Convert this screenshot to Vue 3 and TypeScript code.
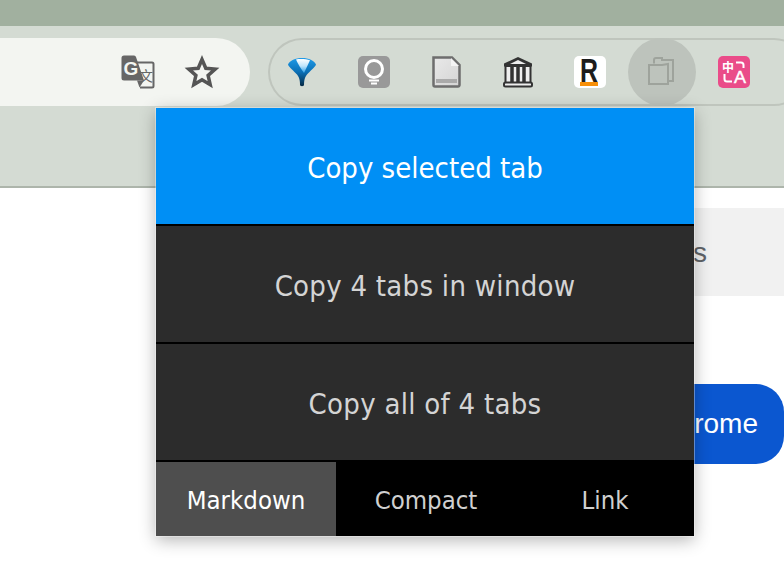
<script setup lang="ts">
const actions: string[] = ['Copy selected tab', 'Copy 4 tabs in window', 'Copy all of 4 tabs']
const formats: string[] = ['Markdown', 'Compact', 'Link']
</script>

<template>
  <div class="screen">
    <div class="titlebar"></div>
    <div class="toolbar">
      <div class="address">
        <span class="slot">
          <svg width="34" height="34" viewBox="0 0 34 34">
            <path d="M14 7.500H31a1.500 1.500 0 0 1 1.500 1.500V31a1.500 1.500 0 0 1-1.500 1.500H19" fill="#f3f5f1" stroke="#666" stroke-width="2" />
            <path d="M3 0.500H13a2 2 0 0 1 2 1.500L23 25.500H3a2.500 2.500 0 0 1-2.500-2.500V3A2.500 2.500 0 0 1 3 0.500Z" fill="#666" />
            <path d="M16 25.500H23L18.500 32.500Z" fill="#666" />
            <text x="2.500" y="20" class="g-letter">G</text>
            <text x="18" y="26" class="g-han">文</text>
          </svg>
        </span>
        <span class="slot">
          <svg width="34" height="34" viewBox="0 0 34 34">
            <polygon points="17,4.500 20.800,13.300 30.200,14.100 23.100,20.400 25.200,29.700 17,24.800 8.800,29.700 10.900,20.400 3.800,14.100 13.200,13.300" fill="none" stroke="#555" stroke-width="3.500" stroke-linejoin="miter" />
          </svg>
        </span>
      </div>
      <div class="extensions">
        <span class="slot">
          <svg width="32" height="32" viewBox="0 0 32 32">
            <defs>
              <linearGradient id="cone" x1="0" y1="0" x2="0" y2="1">
                <stop offset="0" stop-color="#1f9be8" />
                <stop offset="0.5" stop-color="#0a6fb5" />
                <stop offset="1" stop-color="#062a45" />
              </linearGradient>
              <linearGradient id="shine" x1="0" y1="0" x2="0" y2="1">
                <stop offset="0" stop-color="#ffffff" />
                <stop offset="0.5" stop-color="#bfe4fb" />
                <stop offset="1" stop-color="#2b9fe8" />
              </linearGradient>
            </defs>
            <path d="M2 8.500C4 4.500 9 2 16 2s12 2.500 14 6.500c-1 3-6 6.500-9 10-2 2.500-3 5-3 10.500 0 1.500-4 1.500-4 0 0-5.500-1-8-3-10.500C8 15 3 11.500 2 8.500Z" fill="url(#cone)" />
            <path d="M10 3.500C13 2.800 20 2.800 24 4.200L18 17C15 13 12 8 10 3.500Z" fill="url(#shine)" />
          </svg>
        </span>
        <span class="slot">
          <svg width="32" height="32" viewBox="0 0 32 32">
            <rect width="32" height="32" rx="5" fill="#999" />
            <circle cx="16" cy="13" r="8.500" fill="none" stroke="#fff" stroke-width="3" />
            <path d="M11 24.500H21M13 27.500H19" stroke="#fff" stroke-width="2" />
          </svg>
        </span>
        <span class="slot">
          <svg width="32" height="32" viewBox="0 0 32 32">
            <defs>
              <linearGradient id="sheet" x1="0" y1="0" x2="1" y2="1">
                <stop offset="0" stop-color="#e9e9e9" />
                <stop offset="1" stop-color="#d4d4d4" />
              </linearGradient>
            </defs>
            <path d="M3.500 1.500H22L29.500 9V29a1.500 1.500 0 0 1-1.500 1.500H5A1.500 1.500 0 0 1 3.500 29Z" fill="url(#sheet)" stroke="#6e6e6e" stroke-width="2.500" />
            <path d="M21 2V10H29" fill="#f4f4f4" />
            <rect x="6" y="23" width="21" height="4" fill="#aaa" />
          </svg>
        </span>
        <span class="slot">
          <svg width="32" height="32" viewBox="0 0 32 32">
            <path d="M16 1L30 7.500V10.500H2V7.500Z" fill="#333" />
            <path d="M16 4L24 8H8Z" fill="#eee" />
            <rect x="3.500" y="10" width="25" height="18" fill="#eee" stroke="#333" stroke-width="2" />
            <path d="M10 11V27M16 11V27M22 11V27" stroke="#333" stroke-width="3.500" />
            <rect x="2" y="26.500" width="28" height="4" rx="1.500" fill="#eee" stroke="#333" stroke-width="2" />
          </svg>
        </span>
        <span class="slot">
          <svg width="32" height="32" viewBox="0 0 32 32">
            <rect width="32" height="32" rx="5" fill="#fff" />
            <text x="6" y="26" class="r-letter" textLength="18" lengthAdjust="spacingAndGlyphs">R</text>
            <rect x="6" y="26" width="18" height="4" fill="#f79009" />
          </svg>
        </span>
        <span class="slot active">
          <svg width="32" height="32" viewBox="0 0 32 32" fill="none" stroke="#9ea39c" stroke-width="2">
            <path d="M8 7.500V4a2 2 0 0 1 2-2H16V4H27V25H22" />
            <path d="M3 9H16L22 8V28H3Z" />
          </svg>
        </span>
        <span class="slot">
          <svg width="32" height="32" viewBox="0 0 32 32">
            <rect width="32" height="32" rx="5" fill="#ea4c89" />
            <text x="4" y="16" class="pink-han">中</text>
            <text x="16" y="27" class="pink-a" textLength="12" lengthAdjust="spacingAndGlyphs">A</text>
            <path d="M18 6.500H23A2.500 2.500 0 0 1 25.500 9V12" fill="none" stroke="#fff" stroke-width="2" />
            <path d="M6.500 18V23A2.500 2.500 0 0 0 9 25.500H14" fill="none" stroke="#fff" stroke-width="2" />
          </svg>
        </span>
      </div>
    </div>
    <div class="page">
      <div class="search">s</div>
      <div class="install">rome</div>
    </div>
    <div class="popup">
      <button
        v-for="(action, index) in actions"
        :key="action"
        class="action"
        :class="{ selected: index === 0 }"
      >{{ action }}</button>
      <div class="formats">
        <button
          v-for="(format, index) in formats"
          :key="format"
          class="format"
          :class="{ current: index === 0 }"
        >{{ format }}</button>
      </div>
    </div>
  </div>
</template>

<style scoped>
.screen {
  position: relative;
  width: 784px;
  height: 576px;
  overflow: hidden;
  background: #fff;
  font-family: "Liberation Sans", Arial, sans-serif;
}
.titlebar {
  height: 26px;
  background: #a1b09f;
}
.toolbar {
  display: flex;
  align-items: flex-start;
  height: 148px;
  padding-top: 12px;
  background: #d4dbd3;
  border-bottom: 2px solid #adb5ab;
}
.address {
  display: flex;
  flex: none;
  justify-content: flex-end;
  width: 234px;
  height: 68px;
  padding-right: 16px;
  background: #f3f5f1;
  border-radius: 0 34px 34px 0;
}
.address .slot {
  width: 64px;
}
.extensions {
  display: flex;
  flex: none;
  gap: 4px;
  width: 540px;
  height: 68px;
  margin-left: 18px;
  border-radius: 34px;
  box-shadow: inset 0 0 0 2px #bfc5bd;
}
.slot {
  display: flex;
  flex: none;
  align-items: center;
  justify-content: center;
  width: 68px;
  height: 68px;
  border-radius: 50%;
}
.slot.active {
  background: #bdc3bc;
}
svg {
  display: block;
  overflow: visible;
}
.g-letter {
  font: 700 19px "Liberation Sans", sans-serif;
  fill: #f3f5f1;
}
.g-han {
  font: 400 14px "Noto Sans CJK SC", sans-serif;
  fill: #666;
}
.r-letter {
  font: 700 33px "Liberation Sans", sans-serif;
  fill: #1c1c1c;
}
.pink-han {
  font: 700 12px "Noto Sans CJK SC", sans-serif;
  fill: #fff;
}
.pink-a {
  font: 400 16px "Liberation Sans", sans-serif;
  fill: #fff;
  stroke: #fff;
  stroke-width: 0.4px;
}
.page {
  display: flex;
  flex-direction: column;
  align-items: flex-end;
}
.search {
  box-sizing: border-box;
  width: 284px;
  height: 88px;
  margin-top: 20px;
  padding-right: 77px;
  background: #f1f1f1;
  color: #5f6368;
  font-size: 28px;
  line-height: 90px;
  text-align: right;
}
.install {
  box-sizing: border-box;
  width: 184px;
  height: 80px;
  margin-top: 88px;
  padding-right: 26px;
  background: #0b57d0;
  border-radius: 0 28px 28px 0;
  color: #fff;
  font-size: 28px;
  font-weight: 500;
  line-height: 80px;
  text-align: right;
}
.popup {
  position: absolute;
  top: 108px;
  left: 156px;
  display: flex;
  flex-direction: column;
  width: 538px;
  background: #000;
  box-shadow: 0 0 0 1px rgba(255, 255, 255, 0.35), 0 4px 16px rgba(0, 0, 0, 0.3);
  font-family: "DejaVu Sans Condensed", "DejaVu Sans", sans-serif;
}
button {
  border: 0;
  padding: 0;
  font: inherit;
  cursor: pointer;
}
.action {
  height: 116px;
  margin-bottom: 2px;
  padding-top: 4px;
  background: #2c2c2c;
  color: #d4d4d4;
  font-size: 29px;
  letter-spacing: 0.27px;
}
.action.selected {
  background: #008ff5;
  color: #fff;
  letter-spacing: 0;
}
.formats {
  display: grid;
  grid-template-columns: 180px 180px 178px;
  height: 74px;
}
.format {
  padding-top: 2px;
  background: #000;
  color: #d0d0d0;
  font-size: 25.5px;
}
.format.current {
  background: #4e4e4e;
  color: #fff;
}
</style>
